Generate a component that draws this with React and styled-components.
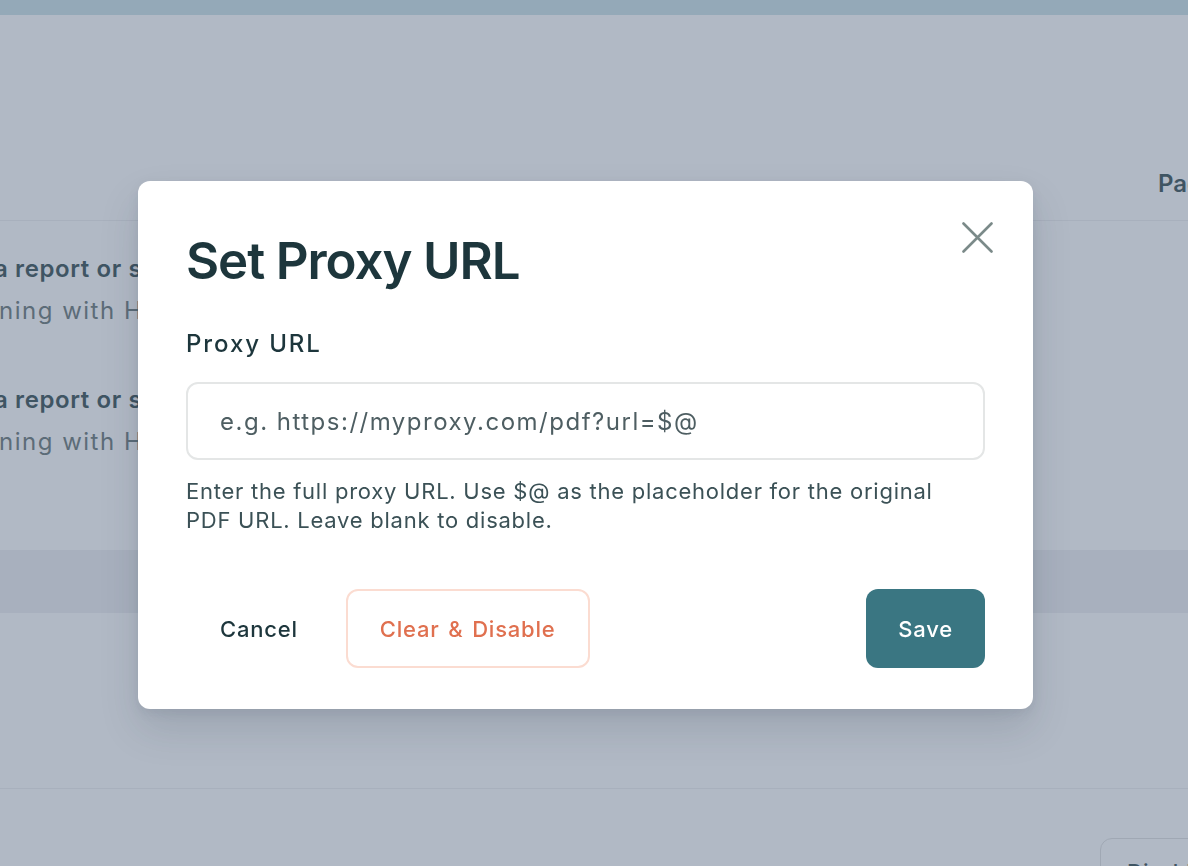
import React from "react";
import styled, { createGlobalStyle } from "styled-components";

const GlobalStyle = createGlobalStyle`
  html, body {
    margin: 0;
    padding: 0;
    overflow: hidden;
    background: #ffffff;
    font-family: Inter, "Noto Sans", sans-serif;
  }
`;

const Page = styled.div`
  width: 1188px;
  height: 866px;
  overflow: hidden;
  background: #ffffff;
`;

const TopBar = styled.div`
  height: 15px;
  background: #c4dee5;
`;

const TableHead = styled.div`
  height: 206px;
  display: flex;
  align-items: flex-end;
  justify-content: flex-end;
  padding-bottom: 22px;
  box-sizing: border-box;
  border-bottom: 1px solid #ececee;
`;

const HeadCell = styled.div`
  width: 30px;
  overflow: hidden;
  white-space: nowrap;
  font-size: 24px;
  font-weight: 600;
  color: #1a363b;
`;

const Rows = styled.div`
  display: flex;
  flex-direction: column;
  gap: 53px;
  padding-top: 30px;
  height: 329px;
  box-sizing: border-box;
`;

const Row = styled.div`
  display: flex;
  flex-direction: column;
  gap: 6px;
  white-space: nowrap;
  letter-spacing: 0.6px;
`;

const RowTitle = styled.div`
  font-size: 24px;
  font-weight: 600;
  line-height: 36px;
  color: #1a363b;
  text-indent: -6px;
`;

const RowSub = styled.div`
  font-size: 24px;
  line-height: 36px;
  color: #546465;
  text-indent: -1px;
  letter-spacing: 1.5px;
`;

const Band = styled.div`
  height: 63px;
  background: #ecedf0;
`;

const Section = styled.div`
  height: 175px;
  border-bottom: 1px solid #ececee;
`;

const Footer = styled.div`
  display: flex;
  justify-content: flex-end;
  padding-top: 49px;
`;

const GhostButton = styled.div`
  width: 150px;
  height: 70px;
  margin-right: -62px;
  box-sizing: border-box;
  border: 1.5px solid #dcdcdc;
  border-radius: 12px;
  padding: 20px 26px;
  font-size: 22px;
  font-weight: 500;
  color: #1a363b;
`;

const Overlay = styled.div`
  position: fixed;
  inset: 0;
  background: rgba(100, 116, 139, 0.5);
  display: flex;
  align-items: flex-start;
  padding: 181px 0 0 138px;
`;

const Modal = styled.div`
  position: relative;
  width: 895px;
  box-sizing: border-box;
  padding: 50px 48px 41px;
  background: #ffffff;
  border-radius: 12px;
  box-shadow: 0 20px 40px rgba(30, 41, 59, 0.14), 0 4px 12px rgba(30, 41, 59, 0.08);
`;

const CloseButton = styled.button`
  position: absolute;
  top: 41px;
  right: 40px;
  width: 31px;
  height: 31px;
  padding: 0;
  border: none;
  background: none;
  display: flex;
  align-items: center;
  justify-content: center;
  color: #7b8a89;
`;

const Title = styled.h2`
  margin: 0;
  font-size: 51px;
  line-height: 60px;
  font-weight: 600;
  letter-spacing: -1.1px;
  color: #1d363c;
`;

const Label = styled.label`
  display: block;
  margin-top: 37px;
  font-size: 24px;
  line-height: 32px;
  font-weight: 500;
  letter-spacing: 1.9px;
  color: #1d363c;
`;

const Input = styled.input`
  display: block;
  width: 100%;
  height: 78px;
  margin-top: 22px;
  box-sizing: border-box;
  padding: 0 32px;
  border: 2px solid #e4e6e6;
  border-radius: 12px;
  font-family: inherit;
  font-size: 24px;
  letter-spacing: 1.5px;
  color: #1d363c;
  outline: none;

  &::placeholder {
    color: #4e5e62;
  }
`;

const Help = styled.p`
  margin: 17px 0 0;
  font-size: 22px;
  line-height: 29px;
  letter-spacing: 0.75px;
  color: #3b5156;
`;

const Actions = styled.div`
  display: flex;
  align-items: center;
  gap: 14px;
  margin-top: 54px;
`;

const Spacer = styled.div`
  flex: 1;
`;

const Button = styled.button`
  height: 79px;
  box-sizing: border-box;
  padding: 0 ${(p) => (p.$variant === "primary" ? "30px" : "32px")};
  border-radius: 12px;
  font-family: inherit;
  font-size: 22px;
  font-weight: 500;
  letter-spacing: 0.8px;
  word-spacing: 2px;
  cursor: pointer;
  border: 2px solid ${(p) => (p.$variant === "danger" ? "#fbdcd1" : "transparent")};
  background: ${(p) => (p.$variant === "primary" ? "#3a7682" : "#ffffff")};
  color: ${(p) =>
    p.$variant === "primary" ? "#ffffff" : p.$variant === "danger" ? "#e0704f" : "#1d363c"};
`;

const CloseIcon = () => (
  <svg width="31" height="31" viewBox="0 0 31 31" fill="none">
    <path d="M1.5 1.5L29.5 29.5M29.5 1.5L1.5 29.5" stroke="currentColor" strokeWidth="2.6" strokeLinecap="round" />
  </svg>
);

const App = () => {
  return (
    <>
      <GlobalStyle />
      <Page>
        <TopBar />
        <TableHead>
          <HeadCell>Pages</HeadCell>
        </TableHead>
        <Rows>
          <Row>
            <RowTitle>a report or summary</RowTitle>
            <RowSub>ning with HTML</RowSub>
          </Row>
          <Row>
            <RowTitle>a report or summary</RowTitle>
            <RowSub>ning with HTML</RowSub>
          </Row>
        </Rows>
        <Band />
        <Section />
        <Footer>
          <GhostButton>Disable</GhostButton>
        </Footer>
      </Page>
      <Overlay>
        <Modal>
          <CloseButton aria-label="Close">
            <CloseIcon />
          </CloseButton>
          <Title>Set Proxy URL</Title>
          <Label htmlFor="proxy-url">Proxy URL</Label>
          <Input id="proxy-url" placeholder="e.g. https://myproxy.com/pdf?url=$@" />
          <Help>
            Enter the full proxy URL. Use $@ as the placeholder for the original
            <br />
            PDF URL. Leave blank to disable.
          </Help>
          <Actions>
            <Button>Cancel</Button>
            <Button $variant="danger">Clear &amp; Disable</Button>
            <Spacer />
            <Button $variant="primary">Save</Button>
          </Actions>
        </Modal>
      </Overlay>
    </>
  );
};

export default App;
